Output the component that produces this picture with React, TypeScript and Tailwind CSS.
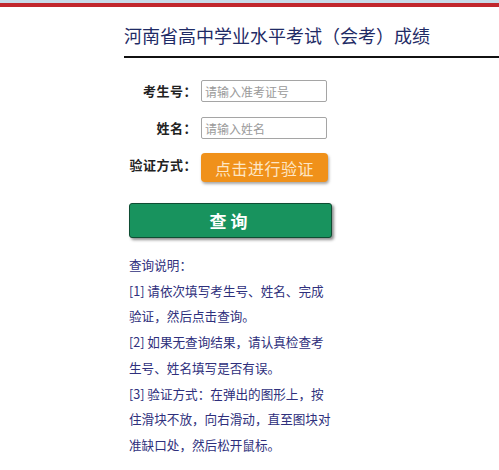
export default function App() {
	const font = { fontFamily: '"Noto Sans CJK SC", "Noto Sans", sans-serif' }
	return (
		<div className="w-[499px] h-[470px] bg-white overflow-hidden" style={font}>
			<div className="h-[3px] bg-[#c8dbe8]" />
			<div className="h-[4px] bg-[#c1272d]" />

			<div className="ml-[124px] mt-[16px] pb-[8px] border-b-2 border-[#111]">
				<h1 className="text-[18px] leading-[25px] text-[#1f2b66] font-normal">河南省高中学业水平考试（会考）成绩</h1>
			</div>

			<div className="ml-[124px] mt-[22px] flex flex-col">
				<div className="flex items-center h-[22px]">
					<label className="w-[73px] text-right text-[13px] font-bold text-[#222] tracking-[0.5px]">考生号：</label>
					<input
						placeholder="请输入准考证号"
						className="ml-[4px] w-[126px] h-[22px] border border-[#a5a5a5] rounded-[2px] px-[3px] text-[12px] placeholder:text-[#9a9a9a] outline-none"
					/>
				</div>
				<div className="flex items-center h-[22px] mt-[15px]">
					<label className="w-[73px] text-right text-[13px] font-bold text-[#222] tracking-[0.5px]">姓名：</label>
					<input
						placeholder="请输入姓名"
						className="ml-[4px] w-[126px] h-[22px] border border-[#a5a5a5] rounded-[2px] px-[3px] text-[12px] placeholder:text-[#9a9a9a] outline-none"
					/>
				</div>
				<div className="flex items-start mt-[14px]">
					<label className="w-[73px] text-right text-[13px] font-bold text-[#222] tracking-[0.5px] leading-[20px] mt-[2px]">验证方式：</label>
					<button className="ml-[4px] w-[127px] h-[29px] bg-[#f0911a] rounded-[4px] text-[16px] text-[#fde6c6] tracking-[0.5px] shadow-[1px_2px_3px_rgba(0,0,0,0.35)]">
						点击进行验证
					</button>
				</div>
			</div>

			<button className="ml-[129px] mt-[21px] w-[203px] h-[35px] bg-[#18935e] border border-[#0f4d33] rounded-[3px] text-white text-[17px] font-bold tracking-[4px] shadow-[2px_2px_3px_rgba(0,0,0,0.45)]">
				查询
			</button>

			<div className="ml-[129px] mt-[14px] w-[206px] text-[12.6px] leading-[25.7px] text-[#2e2f7c]">
				<p>查询说明：</p>
				<p>[1] 请依次填写考生号、姓名、完成验证，然后点击查询。</p>
				<p>[2] 如果无查询结果，请认真检查考生号、姓名填写是否有误。</p>
				<p>[3] 验证方式：在弹出的图形上，按住滑块不放，向右滑动，直至图块对准缺口处，然后松开鼠标。</p>
			</div>
		</div>
	)
}
